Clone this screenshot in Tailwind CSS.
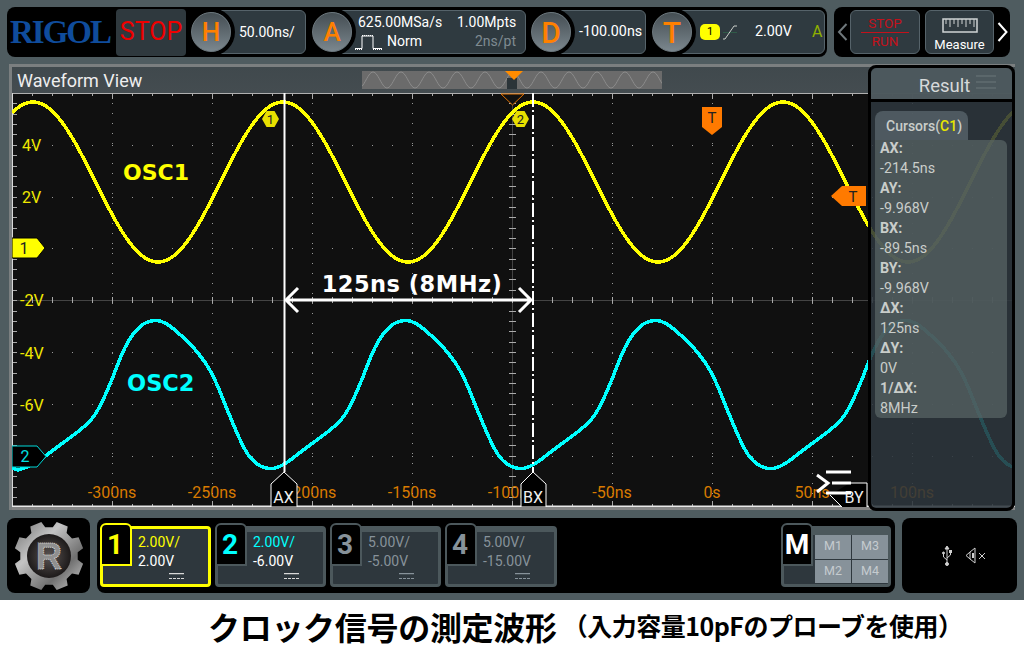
<!DOCTYPE html>
<html lang="en">
<head>
    <meta charset="UTF-8">
    <title>Waveform View</title>
    <script src="https://cdn.jsdelivr.net/npm/@tailwindcss/browser@4"></script>
</head>
<body class="bg-white">
<div class="w-[1024px] h-[655px] overflow-hidden bg-white font-['Roboto',sans-serif]">
    <!-- Scope screen -->
    <div class="h-[600px] bg-[#4f5c60] pt-[7px]">
        <!-- Top bar -->
        <div class="flex h-[50px] pl-[7px] gap-[7px]">
            <div class="w-[820px] h-[50px] rounded-lg bg-black flex items-center">
                <div class="w-[104px] pl-[3px] shrink-0 whitespace-nowrap font-['Liberation_Serif',serif] font-bold text-[33px] leading-[36px] text-[#0f4c9c] tracking-[-2px]">RIGOL</div>
                <div class="w-[70px] h-[47px] ml-[5px] shrink-0 rounded bg-[#2f393e] flex items-center justify-center text-[#f00000] text-[25px]">STOP</div>

                <div class="flex items-center ml-[5px]">
                    <div class="relative z-10 w-10 h-10 shrink-0 rounded-full ring-4 ring-black border border-[#6d787e] bg-linear-to-b from-[#454e53] to-[#7b878e] flex items-center justify-center text-[#ff8000] text-[26px] font-medium">H</div>
                    <div class="w-[95px] h-[44px] -ml-[20px] pl-[27px] rounded-md border border-[#56636a] bg-[#2f3a40] flex items-center text-white text-[14px]">50.00ns/</div>
                </div>

                <div class="flex items-center ml-[6px]">
                    <div class="relative z-10 w-10 h-10 shrink-0 rounded-full ring-4 ring-black border border-[#6d787e] bg-linear-to-b from-[#454e53] to-[#7b878e] flex items-center justify-center text-[#ff8000] text-[26px] font-medium">A</div>
                    <div class="relative w-[194px] h-[44px] -ml-[20px] rounded-md border border-[#56636a] bg-[#2f3a40] text-white text-[14px]">
                        <div class="flex pl-[25px] pt-[3px] leading-[17px] whitespace-nowrap">
                            <span class="w-[99px]">625.00MSa/s</span>
                            <span>1.00Mpts</span>
                        </div>
                        <div class="flex items-center pl-[21px] pt-[2px] leading-[17px] whitespace-nowrap">
                            <svg class="shrink-0" width="30" height="16" viewBox="0 0 30 16" fill="none" stroke="white" stroke-width="1"><path d="M1 14.5h7V2h11v12.5h9" /><path d="M8 1.5h11M1 15.5h7M19 15.5h9" stroke-dasharray="1 1" /></svg>
                            <span class="ml-[3px] w-[88px]">Norm</span>
                            <span class="text-[#7f8b92]">2ns/pt</span>
                        </div>
                    </div>
                </div>

                <div class="flex items-center ml-[5px]">
                    <div class="relative z-10 w-10 h-10 shrink-0 rounded-full ring-4 ring-black border border-[#6d787e] bg-linear-to-b from-[#454e53] to-[#7b878e] flex items-center justify-center text-[#ff8000] text-[30px] font-medium">D</div>
                    <div class="w-[95px] h-[44px] -ml-[20px] pl-[27px] rounded-md border border-[#56636a] bg-[#2f3a40] flex items-center text-white text-[14.3px] whitespace-nowrap">-100.00ns</div>
                </div>

                <div class="flex items-center ml-[6px]">
                    <div class="relative z-10 w-10 h-10 shrink-0 rounded-full ring-4 ring-black border border-[#6d787e] bg-linear-to-b from-[#454e53] to-[#7b878e] flex items-center justify-center text-[#ff8000] text-[30px] font-medium">T</div>
                    <div class="w-[153px] h-[44px] -ml-[20px] pl-[27px] rounded-md border border-[#56636a] bg-[#2f3a40] flex items-center text-white text-[14.3px]">
                        <span class="w-[20px] h-[16px] rounded-[5px] bg-[#ffff00] text-black text-[11px] flex items-center justify-center">1</span>
                        <svg class="ml-[2px]" width="16" height="16" viewBox="0 0 16 16" fill="none"><path d="M1 8.5h14" stroke="#2f5a48" /><path d="M1 15h2L12 2h3" stroke="#c9cdc9" /></svg>
                        <span class="ml-[17px] w-[57px]">2.00V</span>
                        <span class="text-[#8fb000] text-[16px]">A</span>
                    </div>
                </div>
            </div>

            <div class="w-[176px] h-[50px] rounded-lg bg-black flex items-center pl-[3px]">
                <svg width="11" height="18" viewBox="0 0 11 18" fill="none" stroke="#6f787c" stroke-width="2"><path d="M9.5 1L2 9l7.5 8" /></svg>
                <div class="w-[70px] h-[44px] ml-[2px] rounded-md border border-[#56636a] bg-[#2f3a40] flex flex-col items-center justify-center text-[#c4111b] text-[13.5px] leading-[15px]">
                    <span>STOP</span>
                    <span class="w-[48px] h-px my-[1px] bg-[#c4111b]"></span>
                    <span>RUN</span>
                </div>
                <div class="w-[69px] h-[44px] ml-[5px] rounded-md border border-[#56636a] bg-[#2f3a40] flex flex-col items-center text-white text-[13px] leading-[15px] pt-[7px]">
                    <svg width="36" height="15" viewBox="0 0 36 15" fill="none" stroke="#d0d3d3"><path d="M1 1h34v13H1z" stroke-width="1.5" /><path d="M4 1v5M8 1v8M12 1v5M16 1v8M20 1v5M24 1v8M28 1v5M32 1v8" /></svg>
                    <span class="mt-[4px]">Measure</span>
                </div>
                <svg class="ml-[3px]" width="11" height="20" viewBox="0 0 11 20" fill="none" stroke="white" stroke-width="2"><path d="M1.5 1l8 9-8 9" /></svg>
            </div>
        </div>

        <!-- Waveform panel -->
        <div class="relative w-[1006px] h-[446px] ml-[9px] mt-[7px] border-t-[3px] border-l-[3px] border-[#7b7f80]">
            <div class="relative h-[26px] bg-linear-to-b from-[#40494d] to-[#444c50] pl-[5px] text-[#eeeeee] text-[18px] leading-[27px]">
                Waveform View
                <svg class="absolute left-[350px] top-[4px]" width="300" height="18" viewBox="0 0 300 18">
                    <rect width="300" height="18" fill="#6b6b6b" />
                    <path id="overview" fill="none" stroke="#8b8b8b" stroke-width="1" />
                    <rect x="145" y="7" width="10" height="11" fill="#2b3438" />
                    <path d="M143 0h18l-9 9z" fill="#ff8c00" />
                </svg>
            </div>
            <div class="relative h-[417px] bg-[#101010] border-b-[3px] border-[#858585]">
                <svg id="scope" class="absolute inset-0 font-['Roboto',sans-serif]" width="1003" height="414" viewBox="12 93 1003 414">
                    <g id="grid"></g>
                    <path id="wave2" fill="none" stroke="#00ffff" stroke-width="3.5" shape-rendering="crispEdges" />
                    <path id="wave1" fill="none" stroke="#ffff00" stroke-width="3.5" shape-rendering="crispEdges" />

                    <g fill="#f0e800" font-size="16">
                        <text x="22" y="151">4V</text>
                        <text x="22" y="203">2V</text>
                        <text x="20" y="306">-2V</text>
                        <text x="20" y="359">-4V</text>
                        <text x="20" y="411">-6V</text>
                    </g>
                    <g fill="#d97b00" font-size="16" text-anchor="middle">
                        <text x="112" y="498">-300ns</text>
                        <text x="212" y="498">-250ns</text>
                        <text x="312" y="498">-200ns</text>
                        <text x="412" y="498">-150ns</text>
                        <text x="512" y="498">-100ns</text>
                        <text x="612" y="498">-50ns</text>
                        <text x="712" y="498">0s</text>
                        <text x="812" y="498">50ns</text>
                        <text x="912" y="498">100ns</text>
                    </g>

                    <!-- trace notes -->
                    <text x="123" y="180" fill="#ffff00" font-size="22" font-weight="700" font-family="DejaVu Sans">OSC1</text>
                    <text x="127" y="391" fill="#00ffff" font-size="22.5" font-weight="700" font-family="DejaVu Sans">OSC2</text>

                    <!-- cursors -->
                    <path d="M284.5 93V472" stroke="white" stroke-width="2" />
                    <path d="M533 93V472" stroke="white" stroke-width="2" stroke-dasharray="14 3 2 3" />
                    <path d="M271 507V484l13-12 13 12v23z" fill="#000" stroke="white" />
                    <path d="M521 507V484l12-12 13 12v23z" fill="#000" stroke="white" />
                    <text x="283.5" y="503" fill="#eeeeee" font-size="16" text-anchor="middle">AX</text>
                    <text x="533" y="503" fill="#eeeeee" font-size="16" text-anchor="middle">BX</text>

                    <!-- measure arrow -->
                    <path d="M286 300H531M298 288l-12 12 12 12M519 288l12 12-12 12" fill="none" stroke="white" stroke-width="3" />
                    <text x="412" y="292" fill="white" font-size="22.5" font-weight="700" font-family="DejaVu Sans" text-anchor="middle" letter-spacing="0.5">125ns (8MHz)</text>

                    <!-- hex markers -->
                    <path d="M262 119l4.500-8h8l4.500 8-4.500 8h-8z" fill="#e8e000" />
                    <text x="270.500" y="123.500" fill="#222" font-size="13" text-anchor="middle">1</text>
                    <path d="M512 119l4.500-8h8l4.500 8-4.500 8h-8z" fill="#e8e000" />
                    <text x="520.500" y="123.500" fill="#222" font-size="13" text-anchor="middle">2</text>

                    <!-- trigger markers -->
                    <path d="M501 94h23l-11.500 11z" fill="#111" stroke="#e07000" />
                    <path d="M702 107h20v20l-10 8-10-8z" fill="#ff7a00" />
                    <text x="712" y="123" fill="#222" font-size="15" text-anchor="middle">T</text>
                    <path d="M866 186v20h-24l-11-10 11-10z" fill="#ff7a00" />
                    <text x="853" y="202" fill="#222" font-size="15" text-anchor="middle">T</text>

                    <!-- channel markers -->
                    <path d="M12 238h25l8 10-8 10H12z" fill="#ffff00" stroke="#000" />
                    <text x="24" y="254" fill="#222" font-size="16" text-anchor="middle">1</text>
                    <path d="M12 446h25l9 10.500-9 10.500H12z" fill="#000" stroke="#00d8d8" />
                    <text x="25" y="462" fill="#00e0e0" font-size="16" text-anchor="middle">2</text>

                    <!-- BY marker -->
                    <path d="M850 483H867V507H842L830 495z" fill="#000" />
                    <path d="M851 483H867V507M830 495L842 507" fill="none" stroke="white" />
                    <text x="854" y="503" fill="#eeeeee" font-size="16" text-anchor="middle">BY</text>
                    <path d="M826 472h25M832 483h19M826 493h25" stroke="white" stroke-width="3" />
                    <path d="M817 475l11 8-11 9" fill="none" stroke="white" stroke-width="3" />
                </svg>
            </div>

            <!-- Result panel -->
            <div class="absolute -top-[2px] right-0 z-10 w-[147px] h-[446px] rounded-lg border-[3px] border-black bg-[#2c363c]/88 flex flex-col text-[#c9cdca]">
                <div class="relative h-[34px] shrink-0 bg-[#505c60]/90 border-b-[3px] border-black rounded-t-md pl-[6px] text-center text-[18.5px] leading-[36px] text-[#d6d9d9]">
                    Result
                    <svg class="absolute right-[16px] top-[7px]" width="20" height="14" viewBox="0 0 20 14" stroke="#6a767a"><path d="M0 1h20M0 7h20M0 13h20" /></svg>
                </div>
                <div class="pl-[4px] pr-[5px] pt-[9px]">
                    <div class="w-[93px] h-[29px] rounded-t-lg bg-[#58646a]/80 pl-[11px] text-[14px] font-medium leading-[30px] whitespace-nowrap">Cursors(<span class="text-[#e6e600]">C1</span>)</div>
                    <div class="flex flex-col h-[278px] rounded-b-md rounded-tr-md bg-[#5a6666]/70 pl-[5px] text-[14.3px] leading-[20px]">
                        <div class="font-bold -mt-[2px]">AX:</div>
                        <div>-214.5ns</div>
                        <div class="font-bold">AY:</div>
                        <div>-9.968V</div>
                        <div class="font-bold">BX:</div>
                        <div>-89.5ns</div>
                        <div class="font-bold">BY:</div>
                        <div>-9.968V</div>
                        <div class="font-bold">ΔX:</div>
                        <div>125ns</div>
                        <div class="font-bold">ΔY:</div>
                        <div>0V</div>
                        <div class="font-bold">1/ΔX:</div>
                        <div>8MHz</div>
                    </div>
                </div>
            </div>
        </div>

        <!-- Bottom bar -->
        <div class="flex h-[75px] mt-[8px] pl-[7px] gap-[7px]">
            <div class="w-[83px] h-[75px] rounded-lg bg-black flex items-center justify-center">
                <svg width="72" height="72" viewBox="0 0 72 72">
                    <defs>
                        <linearGradient id="silver" x1="0" y1="0" x2="1" y2="1">
                            <stop offset="0" stop-color="#6f6f6f" />
                            <stop offset="0.35" stop-color="#c4c4c4" />
                            <stop offset="0.7" stop-color="#707070" />
                            <stop offset="1" stop-color="#cfcfcf" />
                        </linearGradient>
                        <radialGradient id="hub">
                            <stop offset="0" stop-color="#5a5452" />
                            <stop offset="1" stop-color="#1d1a1a" />
                        </radialGradient>
                    </defs>
                    <path id="gear" fill="url(#silver)" />
                    <circle cx="36" cy="36" r="22" fill="url(#hub)" />
                    <text x="36" y="49" fill="#8f8f8f" stroke="#d8d8d8" stroke-width="1" stroke-dasharray="1 1" font-size="36" font-weight="700" text-anchor="middle" font-family="Liberation Sans">R</text>
                </svg>
            </div>

            <div class="w-[798px] h-[75px] rounded-lg bg-black flex items-start pl-[3px] pr-[4px] gap-[4px] pt-[8px]">
                <!-- channel 1 -->
                <div class="relative w-[111px] h-[61px] rounded border-[3px] border-[#ffff00] bg-[#2e373d] pl-[35px] text-white text-[14px] leading-[19px] pt-[4px]">
                    <div class="absolute -left-[3px] -top-[6px] w-[32px] h-[43px] rounded-t-md bg-black border-[2px] border-[#ffff00] flex items-center justify-center pr-[2px] text-[#ffff00] text-[28px] font-bold">1</div>
                    <div class="text-[#ffff00]">2.00V/</div>
                    <div>2.00V</div>
                    <svg class="absolute right-[24px] bottom-[4px]" width="15" height="7" viewBox="0 0 15 7" stroke="#d8d8d8"><path d="M0 .5h15" stroke-width="1.500" /><path d="M0 5.500h15" stroke-dasharray="3 1" /></svg>
                </div>
                <!-- channel 2 -->
                <div class="relative w-[111px] h-[61px] rounded border-[3px] border-t-[6px] border-[#4c585c] bg-[#2e373d] pl-[35px] text-white text-[14px] leading-[19px] pt-[1px]">
                    <div class="absolute -left-[3px] -top-[9px] w-[32px] h-[43px] rounded-t-md bg-black border-[2px] border-[#4c585c] flex items-center justify-center pr-[2px] text-[#00ffff] text-[28px] font-bold">2</div>
                    <div class="text-[#00ffff]">2.00V/</div>
                    <div>-6.00V</div>
                    <svg class="absolute right-[24px] bottom-[4px]" width="15" height="7" viewBox="0 0 15 7" stroke="#d8d8d8"><path d="M0 .5h15" stroke-width="1.500" /><path d="M0 5.500h15" stroke-dasharray="3 1" /></svg>
                </div>
                <!-- channel 3 -->
                <div class="relative w-[111px] h-[61px] rounded border-[3px] border-t-[6px] border-[#4c585c] bg-[#2e373d] pl-[35px] text-[#87929a] text-[14px] leading-[19px] pt-[1px]">
                    <div class="absolute -left-[3px] -top-[9px] w-[32px] h-[43px] rounded-t-md bg-black border-[2px] border-[#4c585c] flex items-center justify-center pr-[2px] text-[#87929a] text-[28px] font-bold">3</div>
                    <div>5.00V/</div>
                    <div>-5.00V</div>
                    <svg class="absolute right-[24px] bottom-[4px]" width="15" height="7" viewBox="0 0 15 7" stroke="#87929a"><path d="M0 .5h15" stroke-width="1.500" /><path d="M0 5.500h15" stroke-dasharray="3 1" /></svg>
                </div>
                <!-- channel 4 -->
                <div class="relative w-[112px] h-[61px] rounded border-[3px] border-t-[6px] border-[#4c585c] bg-[#2e373d] pl-[35px] text-[#87929a] text-[14px] leading-[19px] pt-[1px]">
                    <div class="absolute -left-[3px] -top-[9px] w-[32px] h-[43px] rounded-t-md bg-black border-[2px] border-[#4c585c] flex items-center justify-center pr-[2px] text-[#87929a] text-[28px] font-bold">4</div>
                    <div>5.00V/</div>
                    <div>-15.00V</div>
                    <svg class="absolute right-[24px] bottom-[4px]" width="15" height="7" viewBox="0 0 15 7" stroke="#87929a"><path d="M0 .5h15" stroke-width="1.500" /><path d="M0 5.500h15" stroke-dasharray="3 1" /></svg>
                </div>
                <!-- math -->
                <div class="relative ml-auto w-[110px] h-[61px] rounded border-[3px] border-[#4c585c] bg-[#2e373d]">
                    <div class="absolute -left-[3px] -top-[6px] w-[32px] h-[43px] rounded-t-md bg-black border-[2px] border-[#4c585c] flex items-center justify-center text-white text-[28px] font-bold">M</div>
                    <div class="h-[6px] bg-[#4c585c]"></div>
                    <div class="grid grid-cols-2 gap-px w-[73px] h-[48px] ml-[31px] text-[#c5cbcf] text-[12.500px]">
                        <div class="bg-[#87929a] flex items-center justify-center">M1</div>
                        <div class="bg-[#87929a] flex items-center justify-center">M3</div>
                        <div class="bg-[#87929a] flex items-center justify-center">M2</div>
                        <div class="bg-[#87929a] flex items-center justify-center">M4</div>
                    </div>
                </div>
            </div>

            <div class="w-[115px] h-[75px] rounded-lg bg-black flex items-center justify-center pl-[9px] gap-[13px]">
                <svg width="10" height="20" viewBox="0 0 10 20" fill="none" stroke="#d0d0d0"><path d="M5 1v17M5 14L1.500 11V8M5 12l3.500-3V6.500" /><path d="M5 0l2 3H3z" fill="#d0d0d0" /><circle cx="5" cy="18" r="1.500" fill="#d0d0d0" /><circle cx="1.500" cy="7" r="1" fill="#d0d0d0" /><rect x="7.500" y="4.500" width="2" height="2" fill="#d0d0d0" /></svg>
                <svg width="21" height="17" viewBox="0 0 21 17" fill="none" stroke="#d0d0d0"><path d="M1 8.500l4-3.500 5-4v15l-5-4z" /><path d="M5 5v7" /><path d="M8 6v5" stroke-width="2" /><path d="M14 6l6 6M20 6l-6 6" /></svg>
            </div>
        </div>
    </div>

    <!-- Caption -->
    <div class="h-[51px] pl-[208px] flex items-center whitespace-nowrap font-['Noto_Sans_CJK_JP',sans-serif] font-bold text-black">
        <span class="text-[32px] leading-none tracking-[-0.3px]">クロック信号の測定波形</span>
        <span class="ml-[6px] text-[25px] leading-none tracking-[-0.5px]">（入力容量10pFのプローブを使用）</span>
    </div>
</div>

<script>
    const NS = 'http://www.w3.org/2000/svg';

    function addLine(parent, d, stroke, extra) {
        const el = document.createElementNS(NS, 'path');
        el.setAttribute('d', d);
        el.setAttribute('stroke', stroke);
        el.setAttribute('fill', 'none');
        if (extra) el.setAttribute('stroke-dasharray', extra);
        parent.appendChild(el);
    }

    // graticule
    const grid = document.getElementById('grid');
    const rows = [145, 197, 248, 352, 404, 456];
    rows.forEach(y => addLine(grid, `M12 ${y + 0.5}H1015`, '#9a9a9a', '1 19'));
    for (let x = 112; x < 1015; x += 100) {
        addLine(grid, `M${x + 0.5} 93V507`, x === 512 ? '#444' : '#9a9a9a', x === 512 ? '' : '1 9');
    }
    addLine(grid, 'M12 300.5H1015', '#444');

    let ticks = '';
    for (let x = 12; x < 1015; x += 20) {
        const len = (x - 12) % 100 === 0 ? 6 : 3;
        ticks += `M${x + 0.5} 93v${len}M${x + 0.5} 507v-${len}M${x + 0.5} 297v6`;
    }
    for (let i = 0; i < 40; i++) {
        const y = Math.round(93 + i * 10.36) + 0.5;
        ticks += `M12 ${y}h5M509 ${y}h7`;
    }
    addLine(grid, ticks, '#aaaaaa');
    addLine(grid, 'M12 93.500H1015', '#b0b0b0');
    addLine(grid, 'M12.500 93V507', '#d8d8d8');
    const base = document.createElementNS(NS, 'rect');
    base.setAttribute('x', 12); base.setAttribute('y', 505.5);
    base.setAttribute('width', 1003); base.setAttribute('height', 2);
    base.setAttribute('fill', '#e8e8e8');
    grid.appendChild(base);

    // channel 1: plain sine
    let d1 = '';
    for (let x = 12; x <= 1015; x += 2) {
        const y = 182 - 80 * Math.cos(2 * Math.PI * (x - 33) / 250);
        d1 += (d1 ? 'L' : 'M') + x + ' ' + y.toFixed(1);
    }
    document.getElementById('wave1').setAttribute('d', d1);

    // channel 2: one period, offset from the peak, read off the trace
    const period = [[0, 320], [8, 321], [16, 325], [30, 337], [45, 352], [60, 374], [75, 412], [90, 447], [100, 462], [115, 470], [130, 466], [150, 450], [175, 432], [192, 417], [207, 385], [222, 345], [237, 325]];
    const pts = [];
    for (let k = -1; k < 4; k++) {
        period.forEach(([dx, y]) => {
            const x = 153 + k * 250 + dx;
            if (x >= 12 && x <= 1060) pts.push([x, y]);
        });
    }
    let d2 = 'M12 468L' + pts[0].join(' ');
    for (let i = 1; i < pts.length - 1; i++) {
        const [x, y] = pts[i];
        const [nx, ny] = pts[i + 1];
        d2 += `Q${x} ${y} ${(x + nx) / 2} ${(y + ny) / 2}`;
    }
    document.getElementById('wave2').setAttribute('d', d2);

    // overview strip
    let ov = '';
    for (let x = 0; x <= 300; x += 1) {
        ov += (ov ? 'L' : 'M') + x + ' ' + (9 - 8 * Math.cos(2 * Math.PI * (x - 11) / 28)).toFixed(1);
    }
    document.getElementById('overview').setAttribute('d', ov);

    // gear outline, 8 teeth
    let gear = '';
    for (let i = 0; i < 8; i++) {
        const a = i * Math.PI / 4 + Math.PI / 8;
        [[-0.26, 29], [-0.17, 35], [0.17, 35], [0.26, 29]].forEach(([da, r]) => {
            const px = 36 + r * Math.cos(a + da);
            const py = 36 + r * Math.sin(a + da);
            gear += (gear ? 'L' : 'M') + px.toFixed(1) + ' ' + py.toFixed(1);
        });
    }
    document.getElementById('gear').setAttribute('d', gear + 'Z');
</script>
</body>
</html>
